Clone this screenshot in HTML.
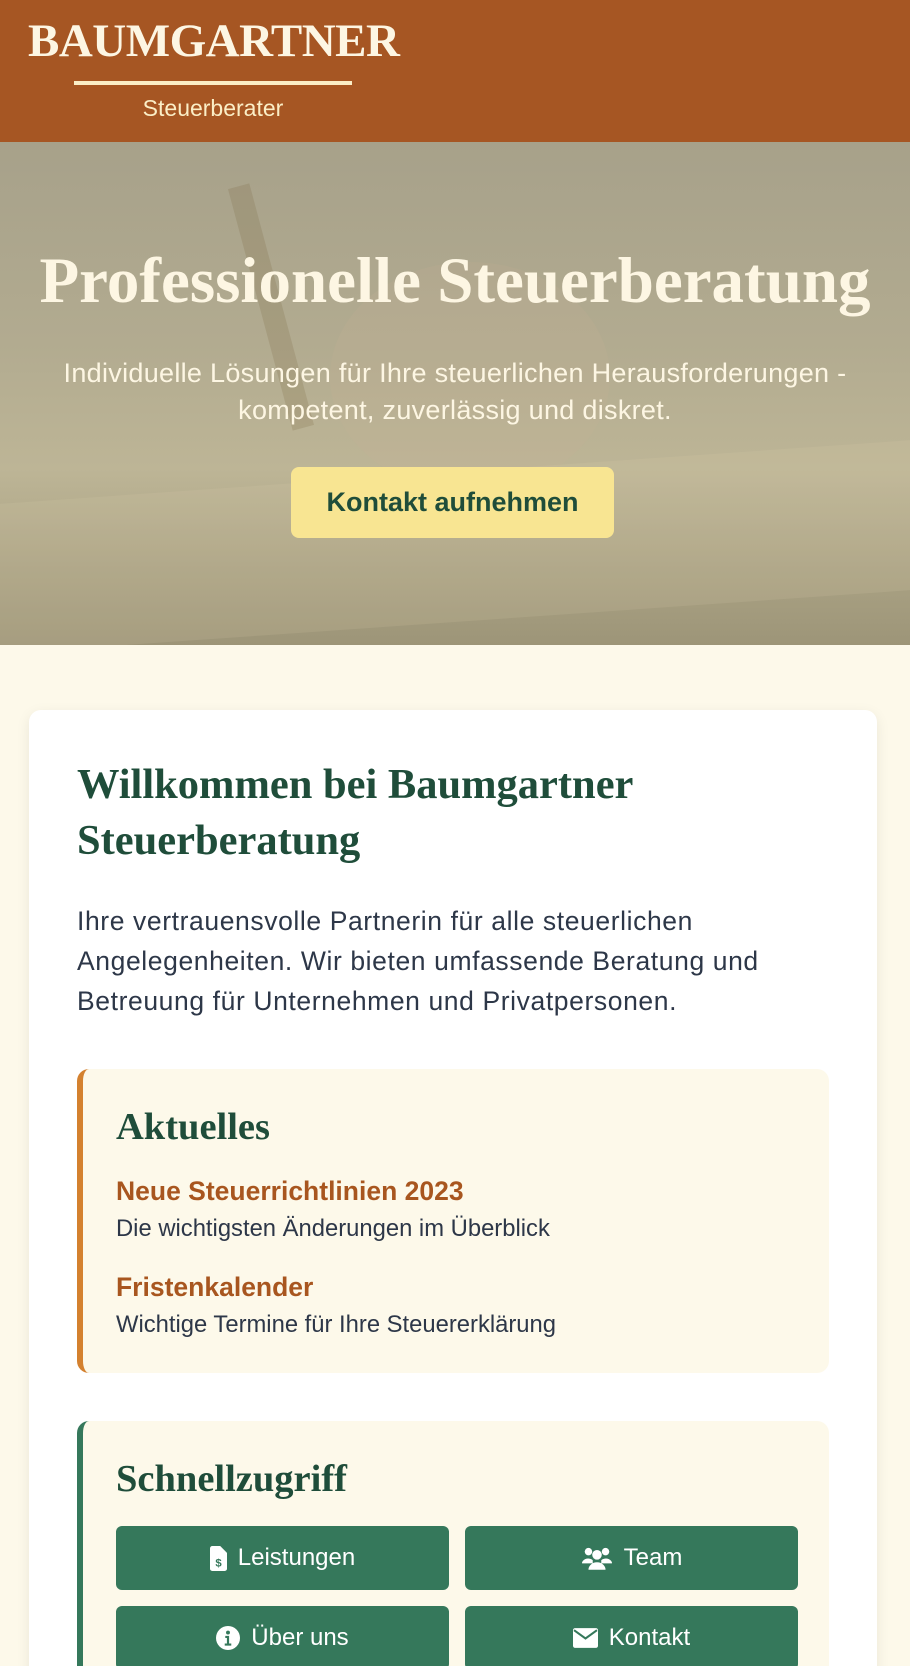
<!DOCTYPE html>
<html><head><meta charset="utf-8">
<style>
*{margin:0;padding:0;box-sizing:border-box}
html,body{width:910px;height:1666px;overflow:hidden}
body{background:#fdf9ea;font-family:"Liberation Sans",sans-serif;position:relative}
.a{position:absolute}
.serif{font-family:"Liberation Serif",serif;font-weight:bold}
header{position:absolute;left:0;top:0;width:910px;height:142px;background:#a65623}
.hero{position:absolute;left:0;top:142px;width:910px;height:503px;overflow:hidden;
background:linear-gradient(180deg,#a7a18a 0%,#b2ab90 40%,#bdb596 65%,#aaa284 85%,#9d9578 100%)}
.card{position:absolute;left:29px;top:710px;width:848px;height:980px;background:#fff;border-radius:12px;box-shadow:0 4px 14px rgba(0,0,0,.08)}
.box{position:absolute;left:77px;width:752px;background:#fdf9ea;border-radius:12px}
.btn{position:absolute;width:333px;height:64px;background:#35785b;border-radius:6px;color:#fff;font-size:24px;display:flex;align-items:center;justify-content:center;gap:11px}
</style></head><body>
<header>
 <div class="a serif" style="left:28px;top:14px;font-size:47px;color:#fdf6e3;letter-spacing:-0.5px">BAUMGARTNER</div>
 <div class="a" style="left:74px;top:81px;width:278px;height:4px;background:#fbeec6"></div>
 <div class="a" style="left:74px;top:95px;width:278px;text-align:center;font-size:23px;color:#fbeec6">Steuerberater</div>
</header>
<div class="hero">
 <div class="a" style="left:260px;top:40px;width:22px;height:250px;background:rgba(120,100,60,.2);transform:rotate(-15deg)"></div>
 <div class="a" style="left:330px;top:120px;width:280px;height:230px;border-radius:50%;background:rgba(200,180,150,.18)"></div>
 <div class="a" style="left:0;top:330px;width:910px;height:150px;background:rgba(220,210,175,.15);transform:skewY(-4deg)"></div>
 <div class="a serif" style="left:0;top:102px;width:910px;text-align:center;font-size:65px;color:#fdf6e3">Professionelle Steuerberatung</div>
 <div class="a" style="left:0;top:213px;width:910px;text-align:center;font-size:27px;letter-spacing:0.3px;line-height:37px;color:#fdf6e3">Individuelle Lösungen für Ihre steuerlichen Herausforderungen -<br>kompetent, zuverlässig und diskret.</div>
 <div class="a" style="left:291px;top:325px;width:323px;height:71px;background:#f8e592;border-radius:8px;color:#1f4d3a;font-weight:bold;font-size:27px;display:flex;align-items:center;justify-content:center">Kontakt aufnehmen</div>
</div>
<div class="card"></div>
<div class="a serif" style="left:77px;top:757px;font-size:42.5px;line-height:56px;color:#1f4d3a">Willkommen bei Baumgartner<br>Steuerberatung</div>
<div class="a" style="left:77px;top:901px;width:800px;font-size:26.5px;letter-spacing:0.6px;line-height:40px;color:#2d3748">Ihre vertrauensvolle Partnerin für alle steuerlichen<br>Angelegenheiten. Wir bieten umfassende Beratung und<br>Betreuung für Unternehmen und Privatpersonen.</div>
<div class="box" style="top:1069px;height:304px;border-left:6px solid #d4812f">
 <div class="a serif" style="left:33px;top:36px;font-size:38.5px;color:#1f4d3a">Aktuelles</div>
 <div class="a" style="left:33px;top:107px;font-size:26.5px;font-weight:bold;color:#a8561f">Neue Steuerrichtlinien 2023</div>
 <div class="a" style="left:33px;top:146px;font-size:23.8px;color:#2d3748">Die wichtigsten Änderungen im Überblick</div>
 <div class="a" style="left:33px;top:203px;font-size:26.5px;font-weight:bold;color:#a8561f">Fristenkalender</div>
 <div class="a" style="left:33px;top:242px;font-size:23.8px;color:#2d3748">Wichtige Termine für Ihre Steuererklärung</div>
</div>
<div class="box" style="top:1421px;height:300px;border-left:6px solid #35785b">
 <div class="a serif" style="left:33px;top:36px;font-size:38.5px;color:#1f4d3a">Schnellzugriff</div>
</div>
<div class="btn" style="left:116px;top:1526px"><svg width="17" height="25" viewBox="0 0 15 22"><path d="M0 2a2 2 0 0 1 2-2h7l6 6v14a2 2 0 0 1-2 2H2a2 2 0 0 1-2-2z" fill="#fff"/><text x="7.5" y="18" font-size="10" text-anchor="middle" fill="#35785b" font-family="Liberation Sans" font-weight="bold">$</text></svg>Leistungen</div>
<div class="btn" style="left:465px;top:1526px"><svg width="32" height="24" viewBox="0 0 30 22"><circle cx="7" cy="5" r="3.5" fill="#fff"/><circle cx="23" cy="5" r="3.5" fill="#fff"/><circle cx="15" cy="8" r="4.5" fill="#fff"/><path d="M1 15a6 5 0 0 1 10-2v3H1zM29 15a6 5 0 0 0-10-2v3h10zM7 22a8 7 0 0 1 16 0z" fill="#fff"/></svg>Team</div>
<div class="btn" style="left:116px;top:1606px"><svg width="24" height="24" viewBox="0 0 22 22"><circle cx="11" cy="11" r="11" fill="#fff"/><circle cx="11" cy="6" r="1.8" fill="#35785b"/><path d="M8.5 9h3.5v7h2v2h-6v-2h2v-5h-1.5z" fill="#35785b"/></svg>Über uns</div>
<div class="btn" style="left:465px;top:1606px"><svg width="25" height="20" viewBox="0 0 24 19"><rect width="24" height="19" rx="2" fill="#fff"/><path d="M1 2l11 8 11-8" stroke="#35785b" stroke-width="2" fill="none"/></svg>Kontakt</div>
</body></html>
